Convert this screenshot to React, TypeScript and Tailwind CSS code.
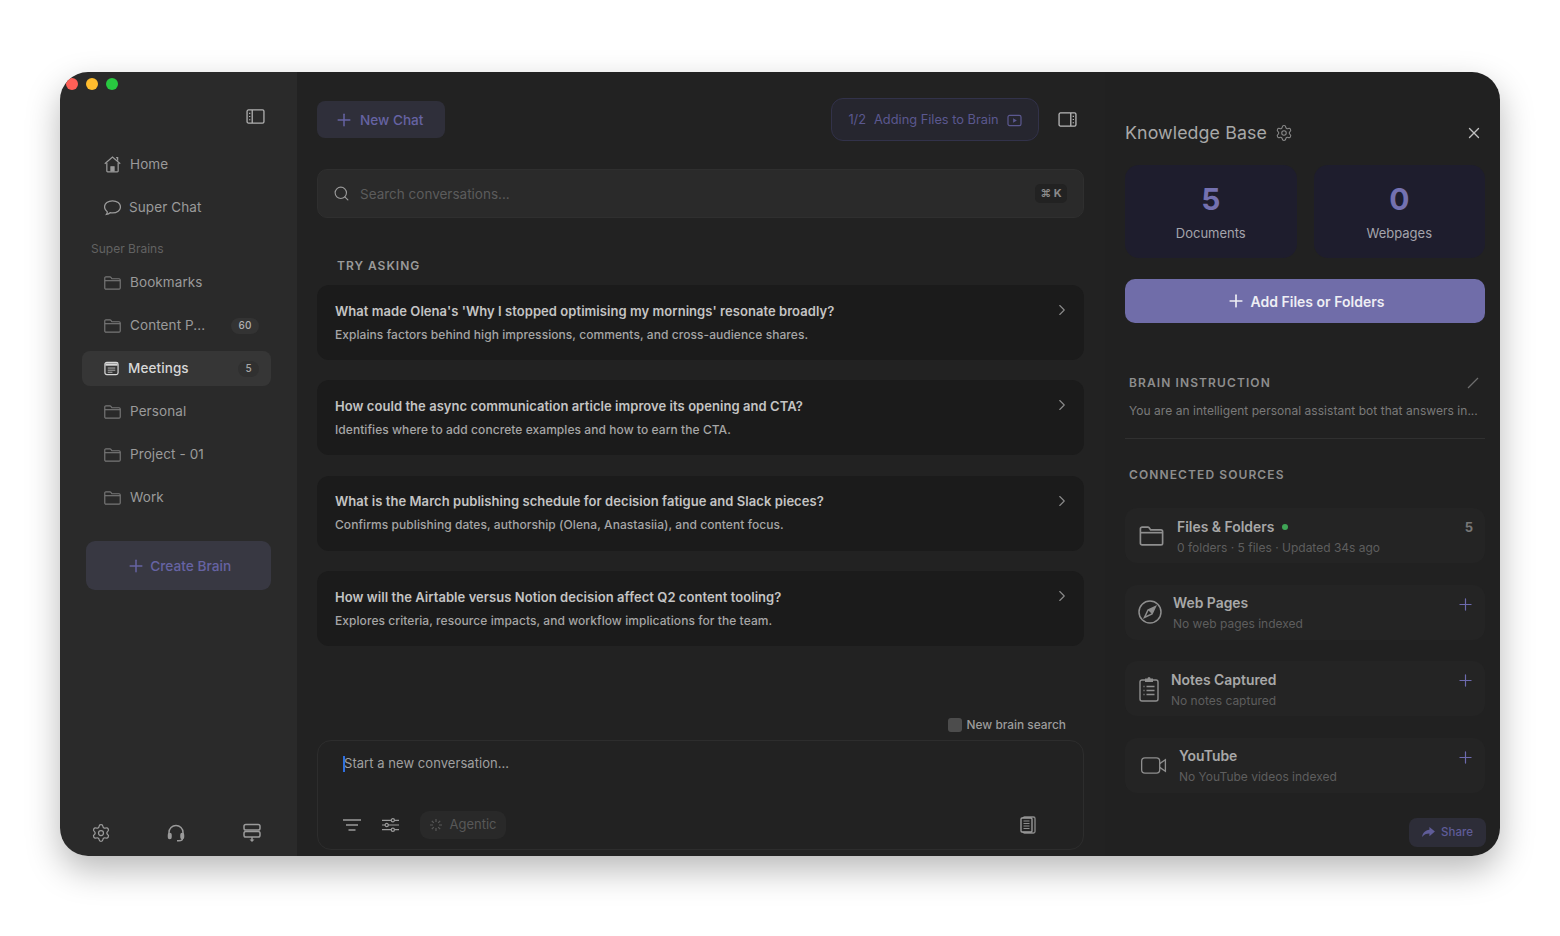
import type { ReactNode } from "react";
import { ChevronRight, Plus, Search, Settings, X } from "lucide-react";

const questions = [
  {
    title: "What made Olena's 'Why I stopped optimising my mornings' resonate broadly?",
    text: "Explains factors behind high impressions, comments, and cross-audience shares.",
  },
  {
    title: "How could the async communication article improve its opening and CTA?",
    text: "Identifies where to add concrete examples and how to earn the CTA.",
  },
  {
    title: "What is the March publishing schedule for decision fatigue and Slack pieces?",
    text: "Confirms publishing dates, authorship (Olena, Anastasiia), and content focus.",
  },
  {
    title: "How will the Airtable versus Notion decision affect Q2 content tooling?",
    text: "Explores criteria, resource impacts, and workflow implications for the team.",
  },
];

function FolderIcon({ className }: { className?: string }) {
  return (
    <svg viewBox="1 1 22 18" fill="none" stroke="currentColor" strokeWidth="1.5" className={className}>
      <path d="M2 5V3.500C2 2.700 2.700 2 3.500 2h5.200c.5 0 .9.2 1.200.6L11.200 4.500h9.300c.8 0 1.500.7 1.500 1.500v10.500c0 .8-.7 1.500-1.500 1.500h-17C2.700 18 2 17.300 2 16.500V5Z" />
      <path d="M2 7h20" />
    </svg>
  );
}

function HomeIcon() {
  return (
    <svg viewBox="1 1 16 16.500" fill="none" stroke="currentColor" strokeWidth="1.200" className="h-[17px] w-[17px] shrink-0">
      <path d="M1.500 8.500 9 2l7.500 6.500" />
      <path d="M3.500 7.500V15.500a.8.8 0 0 0 .8.8h9.400a.8.8 0 0 0 .8-.8V7.500" />
      <path d="M12.500 2.500h1.500v3" />
      <path d="M7.500 16v-4.500h3V16" fill="currentColor" />
    </svg>
  );
}

function ChatIcon() {
  return (
    <svg viewBox="1 2 16 14.500" fill="none" stroke="currentColor" strokeWidth="1.200" className="h-[16px] w-[17px] shrink-0">
      <path d="M9 2.500c4.300 0 7.500 2.500 7.500 5.700s-3.200 5.700-7.500 5.700c-.8 0-1.500-.1-2.200-.2-.9.9-2.100 1.500-3.500 1.600.5-.7.800-1.500.8-2.400C2.800 11.800 1.500 10.100 1.500 8.200 1.500 5 4.700 2.500 9 2.500Z" />
    </svg>
  );
}

function MeetingIcon() {
  return (
    <svg viewBox="0 0 16 16" className="h-[15px] w-[15px] shrink-0" fill="none">
      <rect x="1" y="1.500" width="14" height="13" rx="2" stroke="#d8d8d8" strokeWidth="1.300" />
      <path d="M1.500 2.500h13v2.500h-13z" fill="#d8d8d8" />
      <path d="M4 7.500h8M4 9.800h8M4 12h5" stroke="#b8b8b8" strokeWidth="1" />
    </svg>
  );
}

function SidebarToggleIcon({ right }: { right?: boolean }) {
  return (
    <svg viewBox="0 0 20 16" fill="none" stroke="currentColor" className="h-[15px] w-[19px]">
      <rect x="1" y="1" width="18" height="14" rx="1.500" strokeWidth="1.400" />
      <path d={right ? "M13.500 1v14" : "M6.500 1v14"} strokeWidth="1.400" />
      <path
        d={right ? "M16.200 4v1.200M16.200 7.400v1.200M16.200 10.800V12" : "M3.800 4v1.200M3.800 7.400v1.200M3.800 10.800V12"}
        strokeWidth="1.400"
      />
    </svg>
  );
}

function NavRow({ icon, label, badge, active, gap }: { icon: ReactNode; label: string; badge?: string; active?: boolean; gap: string }) {
  return (
    <div
      className={`ml-[22px] flex h-[35px] w-[189px] items-center rounded-[8px] pl-[21.5px] pr-[12px] ${
        active ? "bg-[#363636] text-[#d8d8d8]" : "text-[#9a9a9a]"
      } ${gap}`}
    >
      {icon}
      <span className={`text-[13.5px] tracking-[0.1px] ${active ? "font-medium" : ""}`}>{label}</span>
      {badge && (
        <span
          className={`ml-auto flex h-[16px] items-center justify-center rounded-full text-[10px] font-medium ${
            active ? "w-[21px] bg-[#303030] text-[#a8a8a8]" : "w-[28px] bg-[#333333] text-[#b0b0b0]"
          }`}
        >
          {badge}
        </span>
      )}
    </div>
  );
}

function Sidebar() {
  const folder = <FolderIcon className="h-[14px] w-[17px] shrink-0 text-[#777777]" />;
  return (
    <aside className="flex w-[237px] shrink-0 flex-col bg-[#2a2a2a] pt-[35px]">
      <div className="flex h-[18px] items-center justify-end pr-[32px] text-[#b0b0b0]">
        <SidebarToggleIcon />
      </div>
      <div className="mt-[22px] flex flex-col gap-[8px]">
        <NavRow icon={<HomeIcon />} label="Home" gap="gap-[9.5px]" />
        <NavRow icon={<ChatIcon />} label="Super Chat" gap="gap-[8.5px]" />
      </div>
      <div className="mt-[16px] mb-[8px] h-[16px] pl-[31px] text-[12px] leading-[16px] text-[#626262]">Super Brains</div>
      <div className="flex flex-col gap-[8px]">
        <NavRow icon={folder} label="Bookmarks" gap="gap-[9.5px]" />
        <NavRow icon={folder} label="Content P..." badge="60" gap="gap-[9.5px]" />
        <NavRow icon={<MeetingIcon />} label="Meetings" badge="5" active gap="gap-[9.5px]" />
        <NavRow icon={folder} label="Personal" gap="gap-[9.5px]" />
        <NavRow icon={folder} label="Project - 01" gap="gap-[9.5px]" />
        <NavRow icon={folder} label="Work" gap="gap-[9.5px]" />
      </div>
      <button className="ml-[26px] mt-[26px] flex h-[49px] w-[185px] items-center justify-center gap-[4.5px] rounded-[9px] bg-[#383842] pt-px text-[13.7px] font-medium text-[#6663a3]">
        <Plus size={20} strokeWidth={1.8} />
        Create Brain
      </button>
      <div className="mt-auto flex h-[33px] items-start justify-between pl-[31px] pr-[35px] text-[#9a9a9a]">
        <Settings size={20} strokeWidth={1.5} />
        <svg viewBox="0 0 20 20" fill="none" stroke="currentColor" strokeWidth="1.500" className="-ml-[2px] h-[20px] w-[20px]">
          <path d="M3 13V9.500a7 7 0 0 1 14 0V13" />
          <rect x="2.500" y="10.500" width="2.500" height="5" rx="1.200" fill="currentColor" />
          <rect x="15" y="10.500" width="2.500" height="5" rx="1.200" fill="currentColor" />
          <path d="M16.500 15.500c0 1.500-1.500 2.300-3.500 2.300h-2" />
        </svg>
        <svg viewBox="0 0 20 20" fill="none" stroke="currentColor" strokeWidth="1.500" className="h-[20px] w-[20px]">
          <rect x="2" y="1.500" width="16" height="5.500" rx="1.800" />
          <rect x="2" y="8.500" width="16" height="5.500" rx="1.800" />
          <path d="M10 14v3" />
          <path d="M7.500 16.500h5L10 19Z" fill="currentColor" stroke="none" />
        </svg>
      </div>
    </aside>
  );
}

function QuestionCard({ title, text }: { title: string; text: string }) {
  return (
    <div className="relative flex h-[75px] flex-col justify-center gap-[6px] rounded-[12px] bg-[#1b1b1b] pl-[18px]">
      <div className="text-[13px] font-semibold leading-[17px] tracking-[0.055px] text-[#c4c4c4]">{title}</div>
      <div className="text-[12px] font-medium leading-[17px] tracking-[0.065px] text-[#a6a6a6]">{text}</div>
      <ChevronRight size={18} strokeWidth={1.5} className="absolute right-[13px] top-[16px] text-[#8a8a8a]" />
    </div>
  );
}

function MainColumn() {
  return (
    <main className="flex flex-1 flex-col bg-[#222222] pl-[20px] pr-[21px] pt-[26px] pb-[6px]">
      <div className="flex items-center">
        <button className="flex h-[37px] w-[128px] items-center gap-[6px] rounded-[8px] bg-[#2f2f3a] pl-[17px] pt-px text-[13.6px] font-medium text-[#6663a3]">
          <Plus size={20} strokeWidth={1.8} />
          New Chat
        </button>
        <div className="ml-auto flex h-[43px] w-[208px] items-center justify-center gap-[8px] rounded-[12px] border border-[#32324a] bg-[#26262f] pt-px text-[12.8px] text-[#5b5890]">
          <span>1/2</span>
          <span>Adding Files to Brain</span>
          <svg viewBox="0 0 16 14" fill="none" stroke="currentColor" className="h-[13px] w-[15px]">
            <rect x="1" y="1.500" width="14" height="11" rx="1.800" strokeWidth="1.300" />
            <path d="M6.500 4.500 10.500 7l-4 2.500Z" fill="currentColor" stroke="none" />
          </svg>
        </div>
        <div className="ml-[19px] mr-[7px] flex text-[#b8b8b8]">
          <SidebarToggleIcon right />
        </div>
      </div>

      <div className="mt-[28px] flex h-[49px] items-center rounded-[10px] border border-[#2f2f2f] bg-[#2a2a2a] pl-[15px] pr-[16px]">
        <Search size={17} strokeWidth={1.6} className="text-[#9a9a9a]" />
        <span className="ml-[10px] pt-[2px] text-[13.5px] text-[#5c5c5c]">Search conversations...</span>
        <span className="ml-auto flex h-[19px] w-[32px] items-center justify-center rounded-[5px] bg-[#222222] text-[11px] font-bold text-[#8a8a8a]">
          ⌘ K
        </span>
      </div>

      <div className="mt-[40px] h-[16px] pl-[20px] text-[12px] font-semibold leading-[16px] tracking-[1px] text-[#9a9a9a]">
        TRY ASKING
      </div>
      <div className="mt-[11px] flex flex-col gap-[20.4px]">
        {questions.map((q) => (
          <QuestionCard key={q.title} title={q.title} text={q.text} />
        ))}
      </div>

      <div className="mt-auto flex h-[16px] items-center justify-end gap-[5px] pr-[18px]">
        <span className="h-[14px] w-[14px] rounded-[3px] bg-[#4c4c4c]" />
        <span className="text-[11.9px] font-medium text-[#9c9c9c]">New brain search</span>
      </div>
      <div className="mt-[7px] flex h-[110px] flex-col rounded-[14px] border border-[#2d2d2d] pl-[25px] pr-[47px]">
        <div className="mt-[14px] flex h-[17px] items-center">
          <span className="h-[16px] w-[2px] bg-[#2f6fe0]" />
          <span className="-ml-[1px] text-[13px] tracking-[0.05px] text-[#a0a0a0]">Start a new conversation...</span>
        </div>
        <div className="mt-auto mb-[10px] flex h-[28px] items-center">
          <svg viewBox="0 0 18 14" fill="none" stroke="#9a9a9a" strokeWidth="1.400" className="h-[14px] w-[18px]">
            <path d="M0 2h18M3 7h12M5.500 12h7" />
          </svg>
          <svg viewBox="0 0 18 16" fill="none" stroke="#9a9a9a" strokeWidth="1.300" className="ml-[21px] h-[16px] w-[17px]">
            <path d="M0 3h18M0 8h18M0 13h18" />
            <circle cx="11.500" cy="3" r="1.700" fill="#222222" />
            <circle cx="5" cy="8" r="1.700" fill="#222222" />
            <circle cx="11.500" cy="13" r="1.700" fill="#222222" />
          </svg>
          <div className="ml-[21px] flex h-[28px] w-[86px] items-center justify-center gap-[6px] rounded-[9px] bg-[#292929] text-[13px] text-[#585858]">
            <svg viewBox="0 0 14 14" fill="none" stroke="currentColor" strokeWidth="1.200" className="h-[14px] w-[14px]">
              <path d="M7 1v3M7 10v3M1 7h3M10 7h3M2.800 2.800l2 2M9.200 9.200l2 2M11.200 2.800l-2 2M4.800 9.200l-2 2" />
            </svg>
            Agentic
          </div>
          <svg viewBox="0 0 16 18" fill="none" className="ml-auto h-[18px] w-[16px]">
            <rect x="3" y="1" width="12" height="16" rx="1.500" stroke="#8c8c8c" strokeWidth="1.300" />
            <rect x="1" y="2" width="11" height="14" rx="1" fill="#222222" stroke="#a0a0a0" strokeWidth="1.300" />
            <path d="M3.500 5h6M3.500 7.500h6M3.500 10h6M3.500 12.500h6" stroke="#8c8c8c" strokeWidth="1" />
          </svg>
        </div>
      </div>
    </main>
  );
}

function SourceCard({
  icon,
  title,
  sub,
  dot,
  count,
  gap,
}: {
  icon: ReactNode;
  title: string;
  sub: string;
  dot?: boolean;
  count?: string;
  gap: string;
}) {
  return (
    <div className={`flex h-[55px] items-center rounded-[12px] bg-[#242424] pl-[14px] pr-[9px] ${gap}`}>
      {icon}
      <div className="flex flex-col gap-[4px] pt-[3px]">
        <div className="flex items-center gap-[8px] text-[13.9px] font-semibold leading-[17px] text-[#a8a8a8]">
          {title}
          {dot && <span className="h-[6px] w-[6px] rounded-full bg-[#3fa556]" />}
        </div>
        <div className="text-[12px] leading-[16px] text-[#5e5e5e]">{sub}</div>
      </div>
      <div className="ml-auto">
        {count ? (
          <div className="mb-[16px] mr-[3px] text-[13px] font-bold text-[#777777]">{count}</div>
        ) : (
          <Plus size={19} strokeWidth={1.5} className="mb-[16px] mr-px text-[#6d6aae]" />
        )}
      </div>
    </div>
  );
}

function KnowledgePanel() {
  return (
    <section className="flex w-[395px] shrink-0 flex-col bg-[#212121] pl-[20px] pr-[15px] pt-[48px]">
      <div className="flex h-[26px] items-center">
        <span className="text-[17.8px] tracking-[0.1px] text-[#a8a8a8]">Knowledge Base</span>
        <Settings size={18} strokeWidth={1.4} className="ml-[8.5px] text-[#8a8a8a]" />
        <X size={18} strokeWidth={1.8} className="ml-auto mr-[2px] text-[#c0c0c0]" />
      </div>
      <div className="mt-[19px] grid grid-cols-2 gap-[17px]">
        {[
          ["5", "Documents"],
          ["0", "Webpages"],
        ].map(([n, label]) => (
          <div key={label} className="flex h-[93px] flex-col items-center rounded-[14px] bg-[#1e1d2d] pt-[16px]">
            <span className="text-[30px] font-bold leading-[36px] text-[#7471b0]">{n}</span>
            <span className="mt-[7px] text-[13px] leading-[18px] text-[#a4a4ac]">{label}</span>
          </div>
        ))}
      </div>
      <button className="mt-[21px] flex h-[44px] items-center justify-center gap-[5px] rounded-[10px] bg-[#706da9] text-[14px] font-semibold text-[#eeeef4]">
        <Plus size={20} strokeWidth={2} />
        Add Files or Folders
      </button>

      <div className="mt-[52px] flex h-[16px] items-center justify-between pl-[4px] pr-[6px]">
        <span className="text-[12px] font-semibold tracking-[1.1px] text-[#8e8e8e]">BRAIN INSTRUCTION</span>
        <svg viewBox="0 0 12 12" stroke="#6e6e6e" strokeWidth="1.200" className="h-[12px] w-[12px]">
          <path d="M1 11 11 1" />
        </svg>
      </div>
      <div className="mt-[12px] h-[16px] pl-[4px] text-[12px] leading-[16px] tracking-[0.04px] whitespace-nowrap text-[#7a7a7a]">
        You are an intelligent personal assistant bot that answers in...
      </div>
      <div className="mt-[19px] h-px bg-[#303030]" />

      <div className="mt-[28px] h-[16px] pl-[4px] text-[12px] font-semibold leading-[16px] tracking-[1.1px] text-[#8e8e8e]">
        CONNECTED SOURCES
      </div>
      <div className="mt-[25px] flex flex-col gap-[21.6px]">
        <SourceCard
          icon={<FolderIcon className="h-[20px] w-[25px] shrink-0 text-[#8e8e8e]" />}
          title="Files & Folders"
          sub="0 folders · 5 files · Updated 34s ago"
          dot
          count="5"
          gap="gap-[13px]"
        />
        <SourceCard
          icon={
            <svg viewBox="0 0 24 24" fill="none" stroke="#8e8e8e" strokeWidth="1.500" className="-ml-px h-[24px] w-[24px] shrink-0">
              <circle cx="12" cy="12" r="11" />
              <path d="M17.500 6.500 14 14l-7.500 3.500L10 10Z" />
              <path d="M17.500 6.500 14 14l-4-4Z" fill="#8e8e8e" stroke="none" />
            </svg>
          }
          title="Web Pages"
          sub="No web pages indexed"
          gap="gap-[11px]"
        />
        <SourceCard
          icon={
            <svg viewBox="0 0 20 26" fill="none" stroke="#8e8e8e" strokeWidth="1.400" className="h-[26px] w-[20px] shrink-0">
              <path d="M6 4H3a2 2 0 0 0-2 2v17a2 2 0 0 0 2 2h14a2 2 0 0 0 2-2V6a2 2 0 0 0-2-2h-3" />
              <path d="M6 2.500h2.500a1.500 1.500 0 0 1 3 0H14V6H6Z" fill="#8e8e8e" stroke="none" />
              <path d="M4.500 10.500h1M4.500 14.500h1M4.500 18.500h1M7.500 10.500h8M7.500 14.500h8M7.500 18.500h8" />
            </svg>
          }
          title="Notes Captured"
          sub="No notes captured"
          gap="gap-[12px]"
        />
        <SourceCard
          icon={
            <svg viewBox="0 0 28 20" fill="none" stroke="#8e8e8e" strokeWidth="1.400" className="ml-[1px] h-[19px] w-[28px] shrink-0">
              <rect x="1" y="2" width="19" height="16" rx="3.500" />
              <path d="M20 8l6-4v12l-6-4" />
            </svg>
          }
          title="YouTube"
          sub="No YouTube videos indexed"
          gap="gap-[11px]"
        />
      </div>

      <button className="-mr-px mb-[9px] ml-auto mt-auto flex h-[29px] w-[77px] items-center justify-center gap-[6px] rounded-[8px] bg-[#2d2d38] text-[11.500px] font-medium text-[#5f5c98]">
        <svg viewBox="0 0 14 12" fill="currentColor" className="h-[11px] w-[13px]">
          <path d="M8 0l6 5-6 5V7C4.500 7 2 8 0 11c.5-4.500 3.500-7.500 8-8V0Z" />
        </svg>
        Share
      </button>
    </section>
  );
}

export default function App() {
  return (
    <div className="min-h-[936px] bg-white px-[60px] pt-[72px] font-['Inter',sans-serif]">
      <div className="relative flex h-[784px] w-[1440px] overflow-hidden rounded-[28px] shadow-[0_14px_34px_rgba(0,0,0,0.28)]">
        <div className="absolute left-[6px] top-[6px] flex gap-[8px]">
          <span className="h-[12px] w-[12px] rounded-full bg-[#fe5f57]" />
          <span className="h-[12px] w-[12px] rounded-full bg-[#febc2e]" />
          <span className="h-[12px] w-[12px] rounded-full bg-[#28c840]" />
        </div>
        <Sidebar />
        <MainColumn />
        <KnowledgePanel />
      </div>
    </div>
  );
}
